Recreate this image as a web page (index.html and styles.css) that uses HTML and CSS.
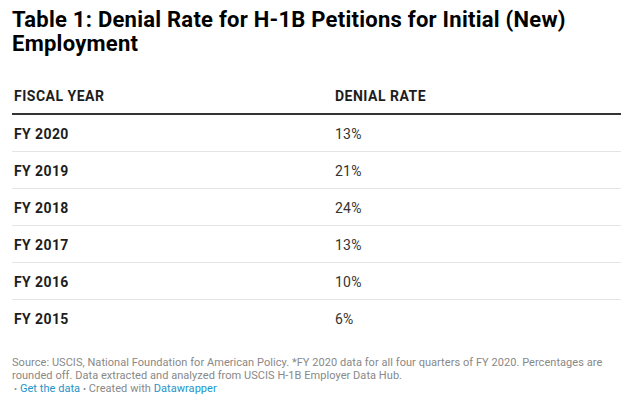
FILE: index.html
```html
<!DOCTYPE html>
<html>
<head>
<meta charset="utf-8">
<link rel="stylesheet" href="styles.css">
</head>
<body>
<div class="chart">
  <h1 class="title">Table 1: Denial Rate for H-1B Petitions for Initial (New) Employment</h1>
  <table class="data">
    <thead>
      <tr><th class="c1">FISCAL YEAR</th><th class="c2">DENIAL RATE</th></tr>
    </thead>
    <tbody>
      <tr><td class="c1">FY 2020</td><td class="c2">13%</td></tr>
      <tr><td class="c1">FY 2019</td><td class="c2">21%</td></tr>
      <tr><td class="c1">FY 2018</td><td class="c2">24%</td></tr>
      <tr><td class="c1">FY 2017</td><td class="c2">13%</td></tr>
      <tr><td class="c1">FY 2016</td><td class="c2">10%</td></tr>
      <tr><td class="c1">FY 2015</td><td class="c2">6%</td></tr>
    </tbody>
  </table>
  <div class="footer">
    <p class="notes">Source: USCIS, National Foundation for American Policy. *FY 2020 data for all four quarters of FY 2020. Percentages are rounded off. Data extracted and analyzed from USCIS H-1B Employer Data Hub.</p>
    <p class="links"><span class="dot">•</span> <a class="link">Get the data</a> <span class="dot">•</span> Created with <a class="link">Datawrapper</a></p>
  </div>
</div>
</body>
</html>
```

FILE: styles.css
```css
html, body {
  margin: 0;
  padding: 0;
  background: #ffffff;
}
body {
  font-family: Roboto, "Liberation Sans", sans-serif;
  color: #1d1d1d;
}
.chart {
  padding: 8px 0 0 12px;
}
.title {
  margin: 0;
  max-width: 560px;
  font-size: 22px;
  line-height: 24px;
  font-weight: 700;
  color: #000;
  letter-spacing: 0.25px;
}
.data {
  margin-top: 21px;
  width: 609px;
  border-collapse: collapse;
  font-size: 14px;
  line-height: 16px;
}
.data th {
  text-align: left;
  font-weight: 700;
  padding: 11px 2px 9px 2px;
  border-bottom: 2px solid #333;
  color: #1d1d1d;
  letter-spacing: 0.5px;
}
.data td {
  text-align: left;
  padding: 11px 2px 9px 2px;
  border-bottom: 1px solid #e5e5e5;
}
.data tbody tr:last-child td {
  border-bottom: none;
}
.data .c1 {
  width: 317px;
}
.data td.c1 {
  font-weight: 700;
  letter-spacing: 0.4px;
}
.data td.c2 {
  color: #333;
  letter-spacing: 0.2px;
}
.footer {
  margin-top: 20px;
  font-size: 11px;
  line-height: 13px;
  color: #888;
  letter-spacing: 0.05px;
}
.footer p {
  margin: 0;
}
.links {
  padding-left: 2px;
}
.link {
  color: #1e94c8;
  text-decoration: none;
}
.dot {
  font-size: 9px;
}
```
